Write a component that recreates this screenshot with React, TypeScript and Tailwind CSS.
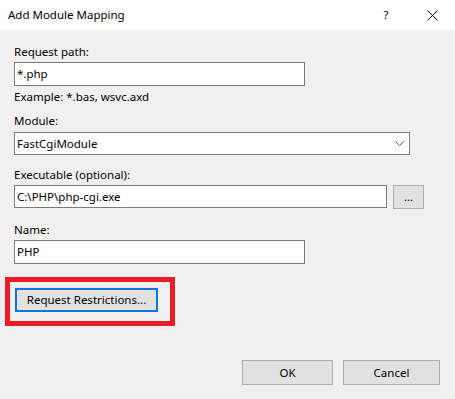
export default function App() {
  return (
    <div className="w-[455px] h-[399px] bg-[#f0f0f0] text-[11.5px] leading-[16px] text-black font-['Noto_Sans',sans-serif] flex flex-col">
      <div className="h-[30px] bg-white flex items-center shrink-0">
        <span className="pl-[8px] flex-1 text-[11.5px]">Add Module Mapping</span>
        <span className="w-[12px] text-center mr-[35px]">?</span>
        <svg width="11" height="11" viewBox="0 0 11 11" className="mr-[17px]">
          <path d="M0.5 0.5 L10.5 10.5 M10.5 0.5 L0.5 10.5" stroke="#000" strokeWidth="1" fill="none" />
        </svg>
      </div>

      <div className="flex flex-col pl-[14px]">
        <label className="mt-[14px]">Request path:</label>
        <div className="mt-[2px] w-[291px] h-[24px] border border-[#7a7a7a] bg-white flex items-center pl-[2px]">*.php</div>
        <div className="mt-[3px]">Example: *.bas, wsvc.axd</div>

        <label className="mt-[8px]">Module:</label>
        <div className="mt-[3px] w-[396px] h-[23px] border border-[#7a7a7a] bg-white flex items-center pl-[2px] pr-[5px]">
          <span className="flex-1">FastCgiModule</span>
          <svg width="9" height="5" viewBox="0 0 9 5">
            <path d="M0.5 0.5 L4.5 4.5 L8.5 0.5" stroke="#606060" strokeWidth="1" fill="none" />
          </svg>
        </div>

        <label className="mt-[12px]">Executable (optional):</label>
        <div className="mt-[2px] flex items-start gap-[6px]">
          <div className="w-[373px] h-[23px] border border-[#7a7a7a] bg-white flex items-center pl-[2px]">C:\PHP\php-cgi.exe</div>
          <button className="w-[31px] h-[24px] border border-[#adadad] bg-[#e1e1e1] flex items-center justify-center leading-none">...</button>
        </div>

        <label className="mt-[13px]">Name:</label>
        <div className="mt-[2px] w-[291px] h-[24px] border border-[#7a7a7a] bg-white flex items-center pl-[2px]">PHP</div>

        <div className="mt-[13px] ml-[-9px] w-[170px] h-[49px] border-[5px] border-[#ed1c24] pl-[5px] pt-[6px]">
          <button className="w-[143px] h-[24px] border-2 border-[#0078d7] bg-[#e1e1e1] flex items-center justify-center">
            Request Restrictions...
          </button>
        </div>
      </div>

      <div className="mt-[34px] flex justify-end gap-[10px] pr-[15px]">
        <button className="w-[91px] h-[25px] border border-[#adadad] bg-[#e1e1e1] flex items-center justify-center">OK</button>
        <button className="w-[97px] h-[25px] border border-[#adadad] bg-[#e1e1e1] flex items-center justify-center">Cancel</button>
      </div>
    </div>
  );
}
